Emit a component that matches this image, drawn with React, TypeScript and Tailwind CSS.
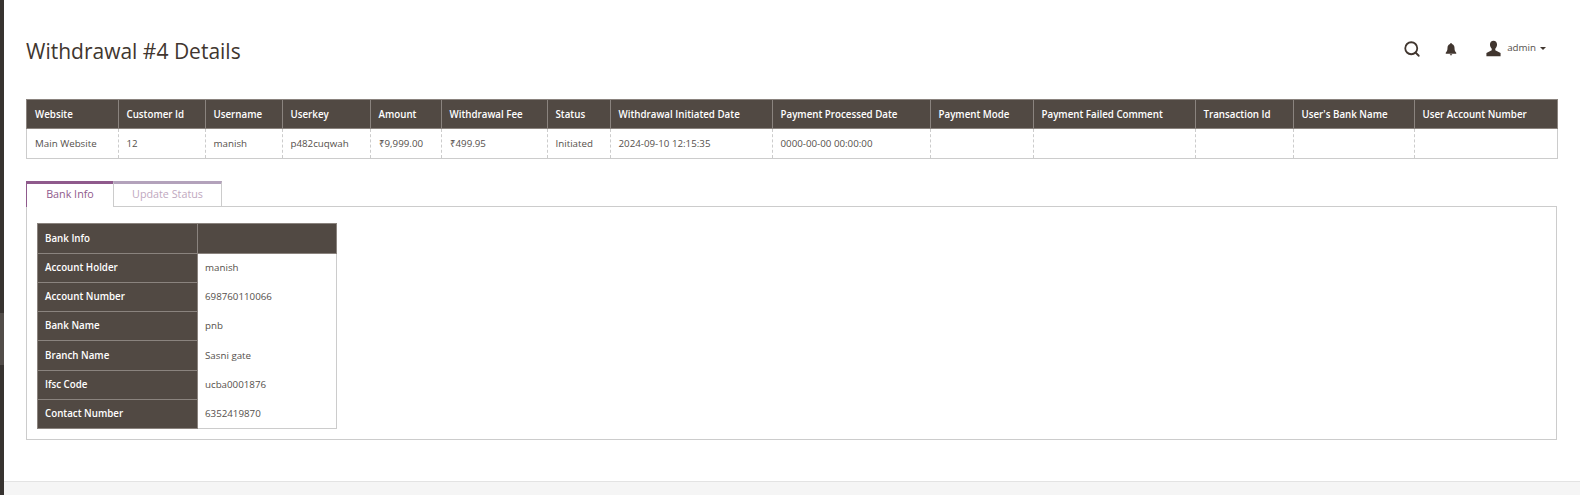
import { Search } from "lucide-react"

const columns = [
  { title: "Website", value: "Main Website", width: "w-[92px]" },
  { title: "Customer Id", value: "12", width: "w-[87px]" },
  { title: "Username", value: "manish", width: "w-[77px]" },
  { title: "Userkey", value: "p482cuqwah", width: "w-[88px]" },
  { title: "Amount", value: "₹9,999.00", width: "w-[71px]" },
  { title: "Withdrawal Fee", value: "₹499.95", width: "w-[106px]" },
  { title: "Status", value: "Initiated", width: "w-[63px]" },
  { title: "Withdrawal Initiated Date", value: "2024-09-10 12:15:35", width: "w-[162px]" },
  { title: "Payment Processed Date", value: "0000-00-00 00:00:00", width: "w-[158px]" },
  { title: "Payment Mode", value: "", width: "w-[103px]" },
  { title: "Payment Failed Comment", value: "", width: "w-[162px]" },
  { title: "Transaction Id", value: "", width: "w-[98px]" },
  { title: "User's Bank Name", value: "", width: "w-[121px]" },
  { title: "User Account Number", value: "", width: "w-[143px]" },
]

const bankRows = [
  ["Account Holder", "manish"],
  ["Account Number", "698760110066"],
  ["Bank Name", "pnb"],
  ["Branch Name", "Sasni gate"],
  ["Ifsc Code", "ucba0001876"],
  ["Contact Number", "6352419870"],
]

export default function App() {
  return (
    <div className="flex h-[495px] overflow-hidden bg-white text-[#55504c] font-['Open_Sans',sans-serif]">
      {/* Collapsed admin menu */}
      <div className="w-1 shrink-0 flex flex-col bg-[#373330]">
        <div className="h-[313px]" />
        <div className="h-[52px] bg-[#524d49]" />
      </div>

      <div className="flex-1 flex flex-col min-w-0">
        <main className="flex-1 pl-[22px] pr-[23px]">
          <header className="flex items-center justify-between h-[99px]">
            <h1 className="text-[21px] font-normal text-[#41362f] leading-none pt-[4px]">Withdrawal #4 Details</h1>
            <div className="flex items-center text-[#41362f] pr-[11px] pb-[2px]">
              <Search size={18} strokeWidth={2.4} />
              <svg viewBox="0 0 24 24" className="w-[14px] h-[14px] ml-[23px]" fill="currentColor">
                <path d="M12 1.500c-.9 0-1.500.6-1.500 1.500v.6C7.500 4.400 6 7 6 10c0 4.500-1 6.500-3 8.500V20h18v-1.500c-2-2-3-4-3-8.500 0-3-1.500-5.600-4.500-6.400V3c0-.9-.6-1.500-1.500-1.500z" />
                <path d="M10 21.200h4c0 1-.9 1.800-2 1.800s-2-.8-2-1.800z" />
              </svg>
              <svg viewBox="0 0 24 24" className="w-[17px] h-[17px] ml-[27px]" fill="currentColor">
                <path d="M12 1c-3 0-5 2.200-5 5.500 0 2.400 1 4.500 2.500 5.800v2.200L2 18.500V23h20v-4.500l-7.500-4v-2.200c1.500-1.300 2.500-3.400 2.500-5.800C17 3.200 15 1 12 1z" />
              </svg>
              <span className="text-[9.75px] text-[#55504c] ml-[5px]">admin</span>
              <span className="ml-[4px] border-x-[3px] border-t-[3px] border-x-transparent border-t-[#41362f]" />
            </div>
          </header>

          <table className="table-fixed border-collapse w-[1531px] text-[9.75px]">
            <thead>
              <tr className="bg-[#514943] text-white">
                {columns.map((col) => (
                  <th
                    key={col.title}
                    className={`${col.width} h-[29px] pl-[7.5px] first:pl-2 pr-2 pt-[2px] text-left font-semibold whitespace-nowrap border border-[#8a837e]`}
                  >
                    {col.title}
                  </th>
                ))}
              </tr>
            </thead>
            <tbody>
              <tr>
                {columns.map((col) => (
                  <td
                    key={col.title}
                    className="h-[30px] pl-[7.5px] first:pl-2 pr-2 pt-px whitespace-nowrap border-x border-b border-x-[#cccccc] border-b-[#cccccc] border-dashed [border-bottom-style:solid] first:[border-left-style:solid] last:[border-right-style:solid]"
                  >
                    {col.value}
                  </td>
                ))}
              </tr>
            </tbody>
          </table>

          <div className="mt-[22px] flex relative z-10 text-[10.75px]">
            <div className="w-[87px] h-[26px] -mb-px flex items-center justify-center bg-white text-[#8f5a8c] font-medium border-t-[3px] border-t-[#8f5a8c] border-l border-l-[#8f5a8c] pb-[3px]">
              Bank Info
            </div>
            <div className="w-[109px] h-[25px] flex items-center justify-center text-[#bfa8c0] font-medium border-t-[3px] border-t-[#b3a2bb] border-x border-x-[#cccccc] pb-px">
              Update Status
            </div>
          </div>
          <section className="w-[1531px] h-[234px] border border-[#cccccc] pt-[16px] pl-[10px]">
            <table className="table-fixed border-collapse w-[300px] text-[9.75px]">
              <thead>
                <tr className="bg-[#514943] text-white">
                  <th className="w-[160px] h-[30px] pl-[7px] pr-2 pt-[2px] text-left font-semibold border border-[#8a837e]">Bank Info</th>
                  <th className="h-[30px] border border-[#8a837e]" />
                </tr>
              </thead>
              <tbody>
                {bankRows.map(([label, value]) => (
                  <tr key={label} className={label === "Branch Name" ? "group h-[30px]" : "group h-[29px]"}>
                    <th className="pl-[7px] pr-2 pt-[1.5px] text-left font-semibold bg-[#514943] text-white border border-[#8a837e] group-first:pt-px">{label}</th>
                    <td className="pl-[7px] pr-2 pt-[1.5px] border-r border-r-[#cccccc] group-first:pt-px group-last:border-b group-last:border-b-[#cccccc]">{value}</td>
                  </tr>
                ))}
              </tbody>
            </table>
          </section>
        </main>

        <footer className="h-[14px] shrink-0 bg-[#f5f5f5] border-t border-t-[#e3e3e3]" />
      </div>
    </div>
  )
}
